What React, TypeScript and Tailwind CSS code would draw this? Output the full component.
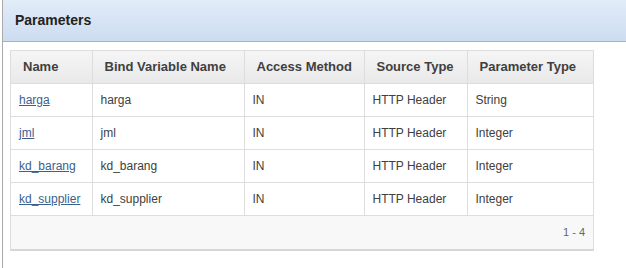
import React from 'react';

const rows = [
  { name: 'harga', bind: 'harga', access: 'IN', source: 'HTTP Header', type: 'String' },
  { name: 'jml', bind: 'jml', access: 'IN', source: 'HTTP Header', type: 'Integer' },
  { name: 'kd_barang', bind: 'kd_barang', access: 'IN', source: 'HTTP Header', type: 'Integer' },
  { name: 'kd_supplier', bind: 'kd_supplier', access: 'IN', source: 'HTTP Header', type: 'Integer' },
];

const headers = ['Name', 'Bind Variable Name', 'Access Method', 'Source Type', 'Parameter Type'];
const widths = ['w-[81px]', 'w-[152px]', 'w-[120px]', 'w-[103px]', 'w-[126px]'];

export default function App() {
  return (
    <div className="w-[626px] h-[268px] bg-white overflow-hidden font-['Liberation_Sans',Arial,sans-serif]">
      <div className="ml-[2px] h-full border-l border-[#aaaaaa]">
        {/* Region header */}
        <div className="h-[42px] flex items-center pl-3 bg-gradient-to-b from-[#e2ecf9] to-[#ccdcf0] border-b border-[#a9b1bb]">
          <h2 className="text-[14px] font-bold text-[#222222]">Parameters</h2>
        </div>

        {/* Region body */}
        <div className="pt-2 pl-[7px]">
          <div className="w-[584px] border border-[#dddddd] border-b-2 border-b-[#d6d6d6]">
            <table className="w-full table-fixed border-collapse text-[12px] text-[#404040]">
              <thead>
                <tr className="bg-gradient-to-b from-[#f5f5f5] to-[#e9e9e9]">
                  {headers.map((h, i) => (
                    <th
                      key={h}
                      className={`${widths[i]} h-[32px] pl-3 pr-1 whitespace-nowrap text-left font-bold text-[13px] text-[#404040] border-b border-[#dddddd] ${i < 4 ? 'border-r' : ''}`}
                    >
                      {h}
                    </th>
                  ))}
                </tr>
              </thead>
              <tbody>
                {rows.map((r) => (
                  <tr key={r.name}>
                    <td className="h-[33px] px-2 border-b border-r border-[#dddddd]">
                      <a href="#" className="text-[#3b5f8e] underline">{r.name}</a>
                    </td>
                    <td className="h-[33px] px-2 border-b border-r border-[#dddddd]">{r.bind}</td>
                    <td className="h-[33px] px-2 border-b border-r border-[#dddddd]">{r.access}</td>
                    <td className="h-[33px] px-2 border-b border-r border-[#dddddd]">{r.source}</td>
                    <td className="h-[33px] px-2 border-b border-[#dddddd]">{r.type}</td>
                  </tr>
                ))}
              </tbody>
            </table>
            <div className="h-[33px] bg-[#f8f8f8] flex items-center justify-end pr-[8px] text-[11px] text-[#666666]">
              1 - 4
            </div>
          </div>
        </div>
      </div>
    </div>
  );
}
